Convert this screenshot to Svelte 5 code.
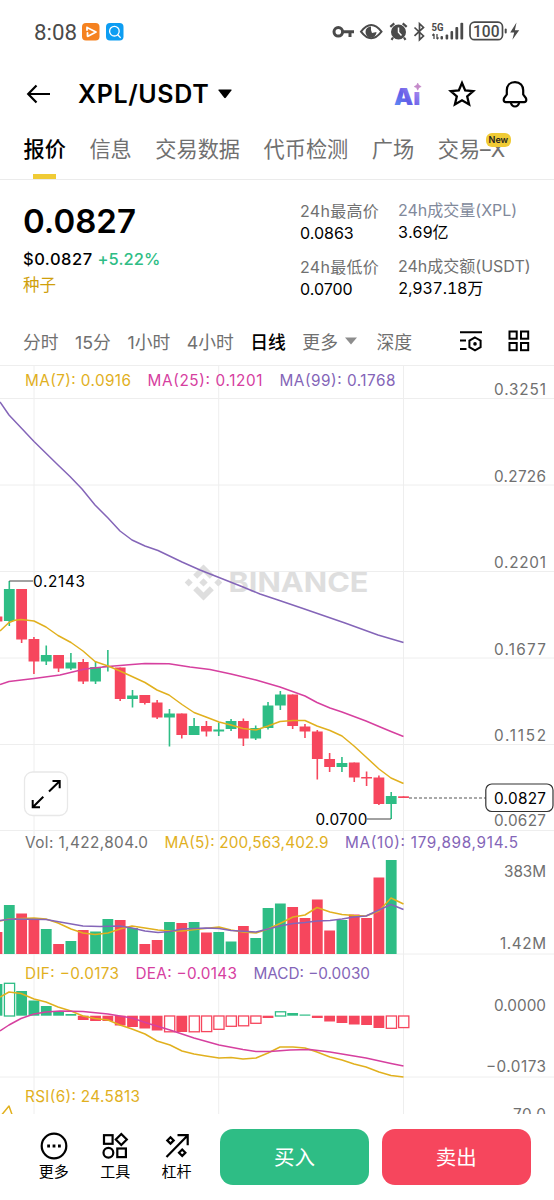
<script>
    const tabs = ['报价', '信息', '交易数据', '代币检测', '广场', '交易–X']
    const intervals = ['分时', '15分', '1小时', '4小时', '日线']
    let activeTab = $state('报价')
    let activeInterval = $state('日线')

    const STEP = 12.32
    const FIRST = 9.3
    const BAR = 10.8
    const VOL_BASE = 954
    const ZERO = 1015.7

    // up?, body top, body bottom, wick top, wick bottom, volume top, macd end, hollow macd bar?, macd up?
    const rows = [
        [0, 616.5, 621.5, 616.5, 621.5, 932, 984, 0, 1],
        [1, 589, 621, 581, 626, 905, 983, 1, 1],
        [0, 589, 639.5, 589, 643, 913.5, 991, 0, 1],
        [0, 639, 661.5, 637, 674, 919, 1000.5, 0, 1],
        [1, 655, 661.5, 645.5, 665, 929, 1006, 0, 1],
        [0, 655, 668.5, 655, 672, 944, 1011.5, 0, 1],
        [1, 662.5, 668.5, 653, 670, 941, 1014, 0, 1],
        [0, 662, 681.5, 659, 684, 930, 1020, 0, 0],
        [1, 667, 681.5, 661, 684, 931.5, 1021, 0, 0],
        [1, 666, 667.2, 650, 671.5, 919, 1021, 0, 0],
        [0, 667.5, 699, 667.5, 701, 920, 1025.5, 0, 0],
        [1, 695.5, 699, 690, 707.5, 928, 1027, 0, 0],
        [0, 695, 703, 695, 704.5, 944, 1028.5, 0, 0],
        [0, 702.5, 717.5, 700, 719, 940, 1030.5, 0, 0],
        [1, 713.5, 717.5, 709, 746.5, 922, 1031.5, 1, 0],
        [0, 713.5, 735, 713.5, 738.5, 923, 1032, 0, 0],
        [1, 726, 735, 718, 735, 922, 1031.5, 1, 0],
        [0, 726, 731.5, 721, 736.5, 932.5, 1031.3, 1, 0],
        [1, 729.5, 731.5, 722.5, 736, 932, 1029, 1, 0],
        [1, 721, 729, 719, 731, 941.5, 1026, 1, 0],
        [0, 721, 738.5, 718.5, 746, 926, 1025.5, 1, 0],
        [1, 728, 738.5, 725.5, 740, 938, 1023, 1, 0],
        [1, 705.5, 728, 702, 729.5, 908, 1018, 0, 0],
        [1, 694.5, 705.5, 691, 710, 903.5, 1011.5, 1, 1],
        [0, 694.5, 726, 694.5, 729, 907, 1013, 0, 1],
        [0, 726.5, 731.5, 724, 738, 918, 1014.5, 0, 1],
        [0, 731.5, 759, 730, 779.5, 899.5, 1018, 0, 0],
        [0, 759, 767, 753, 772, 930.5, 1021.5, 0, 0],
        [1, 763, 767, 757, 772, 920, 1023, 0, 0],
        [0, 762.5, 777.5, 762.5, 782, 914.5, 1024.5, 0, 0],
        [0, 777, 778.5, 771.5, 786, 918, 1025, 0, 0],
        [0, 777.5, 804, 775.5, 805, 877.5, 1028, 0, 0],
        [1, 796, 804, 792, 819, 860, 1028, 1, 0],
        [0, 796.3, 798, 796.3, 798, 954, 1027.3, 1, 0]
    ]

    const candles = rows.map(([up, top, bottom, high, low, vol, macd, hollow, macdUp], i) => {
        const x = FIRST + STEP * (i - 1)
        return {x, left: x - BAR / 2, up, top, bottom, high, low, vol, macd, hollow, macdUp}
    })

    const lines = [
        {color: 'purple', points: '0,402 9,415 34,441.5 58,465 70,476.5 82,489 95,505 108,518 120,531 132,540 145,546 158,550.5 182,562 200,570 219,577.5 243,587 260,594 278,600 303,608.5 345,623 378,635 403.5,642.5'},
        {color: 'pink', points: '0,684.5 9,681.5 34,678.5 60,675 85,669 108,666.5 132,664.5 145,663.5 169,663.8 190,667 210,669.5 231,674 256,680 280,687 305,696 317,702.5 330,708 342,712 366,721 379,726.5 391,731.5 403.5,736.5'},
        {color: 'gold', points: '0,631 9,622.5 15,620.3 21,619.5 34,621 46,627 58,635.5 71,642.5 83,651 95,661.5 108,666 120,671 132,676.5 145,682.5 157,690 169,695 182,704.5 194,712.5 206,717 219,722 231,725 243,728.5 256,730 268,726 280,721.5 293,720.5 305,720.5 317,726 330,730.5 342,736 354,746 366,757 379,769 391,778 403.5,783.5'},
        {color: 'gold', points: '0,921 9,919 34,918 46,919 58,923 71,929 83,933 95,934.5 108,933 120,929 132,926 145,928 158,930 170,931 182,931 200,929 219,927 231,930 243,932 256,933 268,929 280,923.5 293,917 305,915 317,907.5 330,912 342,914.5 354,915.5 366,916 379,911 391,898 403.5,904'},
        {color: 'purple', points: '0,920.5 12,919 46,919.5 60,922 83,926 100,926.5 120,926 132,928 145,931 158,932.5 170,931.5 182,929 206,928 219,928.5 231,930.5 256,932 268,929 280,926 293,923.5 305,922.5 317,921 330,920.5 342,919 354,917 366,916 379,910 391,904.5 403.5,909.5'},
        {color: 'gold', points: '0,997 9,992 21,993.5 34,999 46,1002 58,1007 71,1011 83,1016 95,1018.5 108,1020 120,1025 132,1029 145,1034 157,1041 170,1045 182,1051 194,1054 206,1056 219,1058 231,1057.5 243,1059 256,1058 268,1053 280,1047 293,1047 305,1048 317,1052 330,1057 342,1060 354,1064 366,1067 379,1072 391,1075.5 403.5,1077'},
        {color: 'pink', points: '0,1031 9,1025 21,1018.5 34,1014 46,1012 60,1011 83,1011.5 108,1014 132,1018 150,1024 170,1030 194,1038 219,1045 243,1049.5 256,1051.5 270,1051.5 290,1050 310,1049.5 330,1052 354,1056 366,1058 391,1063.5 403.5,1066'},
        {color: 'gold', points: '2,1114.5 9,1106 12,1114.5'}
    ]

    // text, x, baseline, width, color
    const legends = [
        ['MA(7): 0.0916', 25, 386, 106, 'gold'],
        ['MA(25): 0.1201', 147.5, 386, 115, 'pink'],
        ['MA(99): 0.1768', 279.5, 386, 116, 'purple'],
        ['Vol: 1,422,804.0', 25, 848, 123, 'grey'],
        ['MA(5): 200,563,402.9', 164.5, 848, 164, 'gold'],
        ['MA(10): 179,898,914.5', 345, 848, 173, 'purple'],
        ['DIF: −0.0173', 25, 978.5, 94, 'gold'],
        ['DEA: −0.0143', 135.5, 978.5, 101.5, 'pink'],
        ['MACD: −0.0030', 253.5, 978.5, 116.5, 'purple'],
        ['RSI(6): 24.5813', 25, 1101.5, 115, 'gold']
    ]

    const axis = [
        ['0.3251', 395, 52], ['0.2726', 481.7, 52], ['0.2201', 568.3, 52],
        ['0.1677', 655, 52], ['0.1152', 741.3, 52], ['0.0627', 826.3, 52],
        ['383M', 876.7, 42], ['1.42M', 949.3, 46], ['0.0000', 1011.3, 52],
        ['−0.0173', 1072.3, 60], ['70.0', 1119.5, 33]
    ]

    const gridRows = [365.5, 398.5, 485, 571.5, 658, 744.5, 830.5, 954, 1077]
    const gridCols = [34, 218.7, 403.5]
</script>

<div class="screen">
    <div class="status">
        <div class="status-left">
            <span class="time">8:08</span>
            <svg width="18" height="18" viewBox="0 0 18 18">
                <rect width="17.5" height="17.5" rx="4" fill="#f58220" />
                <path d="M5 4.5L14 9L6 13.3M5 4.5V7M5.5 9.8V13" fill="none" stroke="#fff" stroke-width="1.8" stroke-linejoin="round" stroke-linecap="round" />
            </svg>
            <svg width="18" height="18" viewBox="0 0 18 18">
                <rect width="17.5" height="17.5" rx="4" fill="#0d9df2" />
                <circle cx="8.4" cy="8.2" r="4.8" fill="none" stroke="#fff" stroke-width="1.3" />
                <path d="M12 12l2.2 2.4" stroke="#fff" stroke-width="1.4" stroke-linecap="round" />
            </svg>
        </div>
        <svg class="status-icons" width="190" height="24" viewBox="331 20 190 24">
            <g fill="none" stroke="#4a4a4a" stroke-width="2">
                <circle cx="338.3" cy="31.8" r="4.3" stroke-width="3" />
                <path d="M342.5 31.8H354M350 32v5" stroke-width="3" />
                <path d="M361 31.7Q371.2 18.5 381.5 31.7Q371.2 45 361 31.7Z" />
            </g>
            <path d="M371 26.5a5.5 5.5 0 1 0 5.5 5.5l-4.5 1l-1-3z" fill="#4a4a4a" />
            <circle cx="398.5" cy="32" r="7.5" fill="#4a4a4a" />
            <path d="M398.5 27.5V32.3L401.5 35.5" fill="none" stroke="#fff" stroke-width="1.5" />
            <path d="M390.3 26.8l4-3.5M406.7 26.8l-4-3.5M393 37.5l-1.5 2.3M404 37.5l1.5 2.3" stroke="#4a4a4a" stroke-width="2.2" />
            <path d="M414.5 27.5l9 8.5l-4 3.7V23.7l4 3.7l-9 8.5" fill="none" stroke="#4a4a4a" stroke-width="1.7" />
            <text x="431.5" y="31" font-size="10" font-weight="700" textLength="12" lengthAdjust="spacingAndGlyphs">5G</text>
            <path d="M434 34v5M432.3 35.5l1.7-1.7M437 34v5M438.5 37.5l-1.5 1.7" stroke="#4a4a4a" stroke-width="1.3" />
            <g fill="#4a4a4a">
                <rect x="440.5" y="36" width="2.5" height="3.5" rx="1" />
                <rect x="445.6" y="34.5" width="2.6" height="5" rx="1" />
                <rect x="450.5" y="31" width="2.6" height="8.5" rx="1" />
                <rect x="455.4" y="27" width="2.8" height="12.5" rx="1" />
                <rect x="460.4" y="22.8" width="2.8" height="16.7" rx="1" />
                <rect x="504.7" y="28.5" width="2" height="5" rx="1" />
                <path d="M516.5 22.5l-6.3 10h4l-1.8 7.3l6.8-9.6h-4.3z" />
            </g>
            <rect x="470" y="22.2" width="32.5" height="17.5" rx="4.5" fill="none" stroke="#4a4a4a" stroke-width="1.7" />
            <text x="473" y="36.8" font-size="16.5" font-weight="500" textLength="26.5" lengthAdjust="spacingAndGlyphs">100</text>
        </svg>
    </div>

    <header>
        <svg class="back" width="25" height="20" viewBox="0 0 25 20" fill="none" stroke="#000" stroke-width="2.2">
            <path d="M24 10H3M10.5 1.5L2.2 10l8.3 8.5" />
        </svg>
        <h1>XPL/USDT</h1>
        <svg class="caret" width="14" height="10" viewBox="0 0 14 10"><path d="M1 .5h12q1 0 .4.9L7.8 8.8q-.8.9-1.6 0L.6 1.4Q0 .5 1 .5z" /></svg>
        <div class="header-actions">
            <svg class="ai" width="30" height="28" viewBox="-1 -1 30 28">
                <defs>
                    <linearGradient id="ai" x1="0" x2="1" y1="1" y2="0">
                        <stop offset="0" stop-color="#5b9cf8" />
                        <stop offset=".45" stop-color="#625ee8" />
                        <stop offset=".75" stop-color="#9b82ee" />
                        <stop offset="1" stop-color="#efa08f" />
                    </linearGradient>
                </defs>
                <text x="0" y="22" font-family="Inter, sans-serif" font-size="23" font-weight="900" fill="url(#ai)" textLength="26.5" lengthAdjust="spacingAndGlyphs">Aı</text>
                <path d="M23.7 0Q24.2 3 27.2 3.6Q24.2 4.2 23.7 7.2Q23.2 4.2 20.2 3.6Q23.2 3 23.7 0z" fill="#c48ac9" stroke="#c48ac9" stroke-width=".6" />
            </svg>
            <svg width="28" height="28" viewBox="0 0 28 28" fill="none" stroke="#000" stroke-width="2.3" stroke-linejoin="miter">
                <path d="M14 3l3.2 7.4 8 .7-6 5.3 1.9 8.1L14 20.3l-7.1 4.2 1.9-8.1-6-5.3 8-.7z" />
            </svg>
            <svg width="28" height="28" viewBox="0 0 28 28" fill="none" stroke="#000" stroke-width="2.2">
                <path d="M14 2.1C8.7 2.1 5.8 5.7 5.8 10.2V14.5L3 18.3Q2 21.8 4.7 22.1H23.3Q26 21.8 25 18.3L22.2 14.5V10.2C22.2 5.7 19.3 2.1 14 2.1z" />
                <path d="M9.8 22.5q1 4 4.2 4t4.2-4" />
            </svg>
        </div>
    </header>

    <nav class="tabs">
        {#each tabs as tab}
            <button class={activeTab === tab ? 'active' : ''} onclick={() => { activeTab = tab }}>
                {tab}
                {#if tab === '交易–X'}
                    <span class="badge">New</span>
                {/if}
            </button>
        {/each}
    </nav>

    <section class="summary">
        <div class="price">
            <strong>0.0827</strong>
            <p class="fiat">$0.0827 <span>+5.22%</span></p>
            <p class="tag">种子</p>
        </div>
        <dl class="col-price">
            <dt>24h最高价</dt>
            <dd>0.0863</dd>
            <dt>24h最低价</dt>
            <dd>0.0700</dd>
        </dl>
        <dl class="col-volume">
            <dt class="tinted">24h成交量(XPL)</dt>
            <dd>3.69亿</dd>
            <dt>24h成交额(USDT)</dt>
            <dd>2,937.18万</dd>
        </dl>
    </section>

    <div class="intervals">
        {#each intervals as interval}
            <button class={activeInterval === interval ? 'active' : ''} onclick={() => { activeInterval = interval }}>{interval}</button>
        {/each}
        <button class="more">
            更多
            <svg width="12" height="8" viewBox="0 0 12 8"><path d="M0 .5h12L6 7.5z" fill="#8d8d8d" /></svg>
        </button>
        <button class="depth">深度</button>
        <div class="tools">
            <svg width="24" height="22" viewBox="0 0 24 22" fill="none" stroke="#000" stroke-width="2">
                <path d="M1 2.2h22M1 10.5h6M1 19h6.5" />
                <path d="M16 7.5l5.6 3.2v6.4L16 20.3l-5.6-3.2v-6.4z" />
                <circle cx="16" cy="13.9" r="1.8" fill="#000" stroke="none" />
            </svg>
            <svg width="22" height="22" viewBox="0 0 22 22" fill="none" stroke="#000" stroke-width="2">
                <rect x="1.5" y="1.5" width="7.2" height="7.2" />
                <rect x="13" y="1.5" width="7.2" height="7.2" />
                <rect x="1.5" y="13" width="7.2" height="7.2" />
                <rect x="13" y="13" width="7.2" height="7.2" />
            </svg>
        </div>
    </div>

    <svg class="chart" width="554" height="749" viewBox="0 365 554 749">
        <g stroke="#eee">
            {#each gridRows as y}
                <line x1="0" x2="554" y1={y} y2={y} />
            {/each}
            {#each gridCols as x}
                <line x1={x} x2={x} y1="365" y2="1114" />
            {/each}
        </g>

        <g class="watermark">
            <path d="M203.5 564.5l10.3 10.3-4 4-6.3-6.3-6.3 6.3-4-4zM188.7 578.4l4 4-4 4-4-4zM203.5 578.2l4.2 4.2-4.2 4.2-4.2-4.2zM218.3 578.4l4 4-4 4-4-4zM197.2 586.3l6.3 6.3 6.3-6.3 4 4-10.3 10.3-10.3-10.3z" />
            <text x="228.5" y="592" textLength="140" lengthAdjust="spacingAndGlyphs">BINANCE</text>
        </g>

        {#each candles as c}
            <g class={c.up ? 'up' : 'down'}>
                <line x1={c.x} x2={c.x} y1={c.high} y2={c.low} />
                <rect x={c.left} y={c.top} width={BAR} height={c.bottom - c.top} />
                <rect x={c.left} y={c.vol} width={BAR} height={VOL_BASE - c.vol} />
            </g>
            <g class={c.macdUp ? 'up' : 'down'}>
                {#if c.hollow}
                    <rect class="hollow" x={c.left + .5} y={Math.min(c.macd, ZERO) + .3} width={BAR - .6} height={Math.abs(c.macd - ZERO)} />
                {:else}
                    <rect x={c.left} y={Math.min(c.macd, ZERO)} width={BAR} height={Math.abs(c.macd - ZERO)} />
                {/if}
            </g>
        {/each}

        {#each lines as line}
            <polyline class="line {line.color}" points={line.points} />
        {/each}

        <path d="M9.3 581H33M391 819H367" fill="none" stroke="#444" />
        <text class="value" x="33" y="586.7" textLength="52">0.2143</text>
        <text class="value" x="315.5" y="824.5" textLength="52">0.0700</text>
        <path d="M409 798H486" stroke="#555" stroke-width="1.2" stroke-dasharray="3 2" />

        {#each legends as [text, x, y, width, color]}
            <text class={color} {x} {y} textLength={width}>{text}</text>
        {/each}
        {#each axis as [text, y, width]}
            <text class="axis" x={546 - width} {y} textLength={width}>{text}</text>
        {/each}

        <rect x="485.8" y="784" width="67.2" height="27.5" rx="6" fill="#fff" stroke="#333" stroke-width="1.2" />
        <text class="value" x="494" y="804" textLength="52">0.0827</text>

        <rect x="24.5" y="772" width="43" height="43.5" rx="8" fill="#fff" stroke="#e8e8e8" stroke-width="1.3" />
        <path d="M49 791.5l10.5-10.3M52.5 781h7.2v7.2M43.3 796.7L33 807M40 807.3h-7.3v-7.2" fill="none" stroke="#000" stroke-width="2" />
    </svg>

    <footer>
        <button class="action">
            <svg width="28" height="28" viewBox="0 0 28 28" fill="none" stroke="#000" stroke-width="2.2">
                <circle cx="14" cy="14" r="12.3" />
                <path d="M7.2 14h2.8M12.6 14h2.8M18 14h2.8" stroke-width="2.8" />
            </svg>
            更多
        </button>
        <button class="action">
            <svg width="28" height="28" viewBox="0 0 28 28" fill="none" stroke="#000" stroke-width="2.2">
                <rect x="3" y="3.2" width="8.6" height="8.6" />
                <path d="M20.3 2l5.5 5.5-5.5 5.5-5.5-5.5z" />
                <circle cx="7.4" cy="20.7" r="4.9" />
                <rect x="16.3" y="16.5" width="8.6" height="8.6" />
            </svg>
            工具
        </button>
        <button class="action">
            <svg width="28" height="28" viewBox="0 0 28 28" fill="none" stroke="#000" stroke-width="2.2">
                <path d="M3.5 25L24.3 3.7M14.5 3.2h10.2v10" />
                <path d="M7.5 5.2l3.2 3.2-3.2 3.2-3.2-3.2zM19.2 17.5l3.2 3.2-3.2 3.2-3.2-3.2z" />
            </svg>
            杠杆
        </button>
        <button class="trade buy">买入</button>
        <button class="trade sell">卖出</button>
    </footer>
</div>

<style>
    .screen {
        width: 554px;
        height: 1200px;
        display: flex;
        flex-direction: column;
        background-color: #fff;
        color: #000;
        font-family: Inter, "Noto Sans CJK SC", sans-serif;
        overflow: hidden;
    }

    svg {
        display: block;
        flex: none;
    }

    button {
        appearance: none;
        border: 0;
        padding: 0;
        background: none;
        color: inherit;
        font: inherit;
        letter-spacing: inherit;
        white-space: nowrap;
    }

    h1, p, dl, dt, dd {
        margin: 0;
        font-weight: 400;
    }

    .status {
        height: 63px;
        box-sizing: border-box;
        display: flex;
        align-items: center;
        justify-content: space-between;
        padding: 0 33px 0 34px;
        color: #4a4a4a;
    }

    .status-left {
        display: flex;
        align-items: center;
        gap: 6px;
    }

    .time {
        font-family: Roboto, sans-serif;
        font-size: 22.3px;
        width: 42px;
    }

    .status-icons text {
        font-family: Roboto, sans-serif;
        fill: #4a4a4a;
    }

    header {
        height: 61px;
        display: flex;
        align-items: center;
        padding: 0 25px 0 26px;
    }

    h1 {
        margin-left: 27px;
        font-size: 25px;
        font-weight: 600;
        letter-spacing: .65px;
        width: 132px;
        white-space: nowrap;
    }

    .caret {
        margin-left: 8px;
    }

    .header-actions {
        margin-left: auto;
        display: flex;
        align-items: center;
        gap: 25px;
    }

    .ai {
        margin-top: 4px;
    }

    .tabs {
        height: 56px;
        box-sizing: border-box;
        display: flex;
        gap: 23.5px;
        padding-left: 23.5px;
        border-bottom: 1px solid #ebebeb;
        font-size: 21.2px;
        color: #707070;
    }

    .tabs button {
        position: relative;
        padding-bottom: 8px;
    }

    .tabs .active {
        color: #000;
        font-weight: 500;
    }

    .tabs .active::after {
        content: '';
        position: absolute;
        left: 9px;
        bottom: 0;
        width: 23px;
        height: 5px;
        background-color: #f0cb35;
    }

    .badge {
        position: absolute;
        top: 9px;
        right: -6px;
        padding: 0 3px;
        border-radius: 6px;
        background-color: #f0cb35;
        color: #222;
        font-size: 9px;
        line-height: 13.5px;
        font-weight: 600;
    }

    .summary {
        height: 136px;
        display: flex;
        padding: 0 23px;
    }

    .price {
        width: 277px;
        padding-top: 22px;
    }

    .price strong {
        display: block;
        font-size: 33px;
        line-height: 38px;
        font-weight: 600;
    }

    .fiat {
        padding-top: 7px;
        font-size: 16.5px;
        line-height: 24px;
        letter-spacing: .5px;
        font-weight: 500;
    }

    .fiat span {
        letter-spacing: .1px;
        color: #2ebd85;
    }

    .tag {
        font-size: 16.5px;
        line-height: 28px;
        color: #cf9f0c;
    }

    dl {
        font-size: 16px;
        padding-top: 20px;
    }

    .col-price {
        width: 98px;
    }

    .col-price dt {
        letter-spacing: .3px;
    }

    .col-volume {
        padding-top: 19px;
    }

    dt {
        height: 22px;
        line-height: 22px;
        color: #707070;
        white-space: nowrap;
    }

    dd {
        height: 34px;
        line-height: 22px;
        white-space: nowrap;
    }

    .col-volume dd {
        letter-spacing: -.2px;
        font-variant-numeric: tabular-nums;
    }

    .tinted {
        color: #81899b;
    }

    .intervals {
        height: 49px;
        box-sizing: border-box;
        display: flex;
        align-items: center;
        gap: 16.5px;
        padding: 0 24px 0 23px;
        font-size: 17.8px;
        color: #707070;
    }

    .intervals .active {
        color: #000;
        font-weight: 500;
    }

    .more {
        display: flex;
        align-items: center;
        gap: 7px;
    }

    .depth {
        margin-left: 3px;
    }

    .tools {
        margin-left: auto;
        display: flex;
        gap: 25px;
    }

    .chart text {
        font-size: 15.3px;
    }

    .chart .watermark text {
        font-size: 27px;
        font-weight: 700;
    }

    .watermark {
        fill: #dedede;
    }

    .up {
        fill: #2ebd85;
        stroke: #2ebd85;
    }

    .down {
        fill: #f6465d;
        stroke: #f6465d;
    }

    .up rect, .down rect {
        stroke: none;
    }

    .up line, .down line {
        stroke-width: 1.6;
    }

    .up .hollow {
        fill: #fff;
        stroke: #2ebd85;
        stroke-width: 1.3;
    }

    .down .hollow {
        fill: #fff;
        stroke: #f6465d;
        stroke-width: 1.3;
    }

    .gold {
        fill: #e1b01e;
    }

    .pink {
        fill: #d6409f;
    }

    .purple {
        fill: #8465b8;
    }

    .grey, .axis {
        fill: #707070;
    }

    .line {
        fill: none;
        stroke-width: 1.5;
        stroke-linejoin: round;
    }

    .line.gold {
        stroke: #e1b01e;
    }

    .line.pink {
        stroke: #d6409f;
    }

    .line.purple {
        stroke: #8465b8;
    }

    footer {
        height: 86px;
        box-sizing: border-box;
        display: flex;
        align-items: flex-start;
        padding: 15px 23px 0;
    }

    .action {
        width: 61.5px;
        display: flex;
        flex-direction: column;
        align-items: center;
        padding-top: 3px;
        gap: 1px;
        font-size: 15px;
        line-height: 22px;
    }

    .trade {
        width: 149.5px;
        height: 56px;
        margin-left: 12.5px;
        padding-bottom: 3px;
        border-radius: 13px;
        color: #fff;
        font-size: 20.5px;
    }

    .buy {
        background-color: #2ebd85;
    }

    .sell {
        background-color: #f6465d;
    }
</style>
